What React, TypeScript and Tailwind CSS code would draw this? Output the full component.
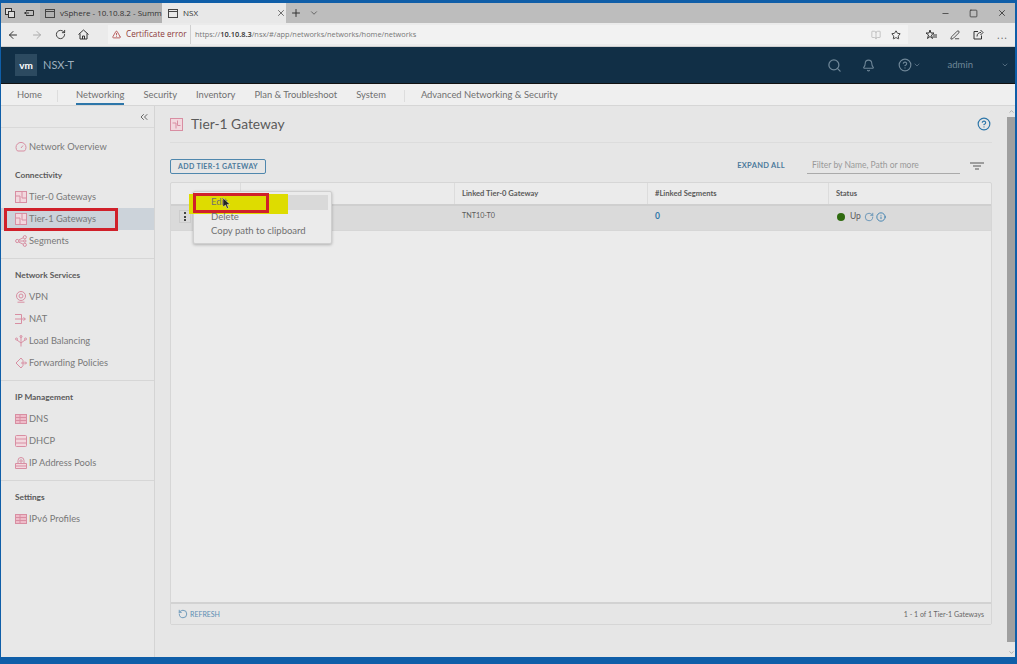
import { ArrowLeft, ArrowRight, RotateCw, TriangleAlert, BookOpen, Star, PenLine, X, Plus, ChevronDown, Minus, Square, Search, Bell, CircleHelp, ChevronsLeft, Info, ChevronUp } from "lucide-react";
import type { ReactNode } from "react";

const pink = "#d88ea2";

function GatewayIcon() {
  return (
    <svg width="12" height="12" viewBox="0 0 12 12" fill="#f2d8de" stroke={pink} strokeWidth="1" className="shrink-0">
      <rect x="0.500" y="0.500" width="11" height="11" />
      <path d="M0.500 5H5V11.500M7 0.500V7H11.500" fill="none" />
    </svg>
  );
}

function ServerIcon() {
  return (
    <svg width="12" height="12" viewBox="0 0 12 12" fill="#eebcc9" stroke={pink} strokeWidth="1" className="shrink-0">
      <rect x="0.500" y="1.500" width="11" height="9" />
      <path d="M0.500 4.500H11.500M0.500 7.500H11.500M5 1.500V10.500" />
    </svg>
  );
}

function GaugeIcon() {
  return (
    <svg width="12" height="12" viewBox="0 0 12 12" fill="none" stroke={pink} strokeWidth="1" className="shrink-0">
      <path d="M2.500 10a5 5 0 1 1 7 0z" />
      <path d="M6 7l2-2.500" />
    </svg>
  );
}

function SegmentsIcon() {
  return (
    <svg width="12" height="12" viewBox="0 0 12 12" fill="none" stroke={pink} strokeWidth="1" className="shrink-0">
      <circle cx="2.200" cy="6" r="1.600" />
      <circle cx="9.800" cy="2.200" r="1.600" />
      <circle cx="9.800" cy="9.800" r="1.600" />
      <circle cx="9.800" cy="6" r="1.200" />
      <path d="M3.800 6H8.500M3.600 5l4.800-2.300M3.600 7l4.800 2.300" />
    </svg>
  );
}

function VpnIcon() {
  return (
    <svg width="12" height="12" viewBox="0 0 12 12" fill="none" stroke={pink} strokeWidth="1" className="shrink-0">
      <circle cx="6" cy="5" r="4.500" />
      <circle cx="6" cy="5" r="2" />
      <path d="M2.500 11.200H9.500" />
    </svg>
  );
}

function NatIcon() {
  return (
    <svg width="12" height="12" viewBox="0 0 12 12" fill="none" stroke={pink} strokeWidth="1" className="shrink-0">
      <path d="M0 1.500H6.500V10.500H0M0 6H10M8.500 4.500L10.500 6L8.500 7.500" />
    </svg>
  );
}

function BalanceIcon() {
  return (
    <svg width="12" height="12" viewBox="0 0 12 12" fill="none" stroke={pink} strokeWidth="1" className="shrink-0">
      <path d="M6 1.500V11.500M6 8L2 5M6 8L10 5" />
      <circle cx="6" cy="1.500" r="1" />
      <circle cx="1.500" cy="4" r="1" />
      <circle cx="10.500" cy="4" r="1" />
    </svg>
  );
}

function ForwardIcon() {
  return (
    <svg width="12" height="12" viewBox="0 0 12 12" fill="none" stroke={pink} strokeWidth="1" className="shrink-0">
      <path d="M6 1L1 6L6 11L8 8.500V3.500Z" />
      <path d="M6 6H11.500M10 4.500L11.500 6L10 7.500" />
    </svg>
  );
}

function DhcpIcon() {
  return (
    <svg width="12" height="12" viewBox="0 0 12 12" fill="#f2d8de" stroke={pink} strokeWidth="1" className="shrink-0">
      <rect x="0.500" y="0.500" width="11" height="11" rx="1" />
      <path d="M0.500 4H11.500M0.500 8H11.500" />
    </svg>
  );
}

function PoolIcon() {
  return (
    <svg width="12" height="12" viewBox="0 0 12 12" fill="none" stroke={pink} strokeWidth="1" className="shrink-0">
      <path d="M3 6V3.500a3 3 0 0 1 6 0V6" />
      <circle cx="6" cy="4" r="1.200" />
      <path d="M0.500 6.500H11.500V11.500H0.500ZM0.500 9H11.500" fill="#f2d8de" />
    </svg>
  );
}

function Item({ icon, label, active }: { icon: ReactNode; label: string; active?: boolean }) {
  return (
    <div className={`flex h-[22px] items-center gap-[2px] pl-[14px] text-[9.300px] text-[#787878] ${active ? "bg-[#ccd3da]" : ""}`}>
      {icon}
      <span>{label}</span>
    </div>
  );
}

function Section({ title }: { title: string }) {
  return <div className="pl-[14px] text-[8.300px] font-bold leading-[10px] text-[#5a5a5a]">{title}</div>;
}

export default function App() {
  return (
    <div className="relative flex h-[664px] w-[1017px] flex-col overflow-hidden border-y-0 border-r-2 border-l border-t-[3px] border-b-[7px] border-[#0f5ea8] bg-[#e6e6e6] font-['Lato',sans-serif]">
      {/* browser tabs */}
      <div className="flex h-[20px] shrink-0 items-center bg-[#bdbdbd] font-['Open_Sans',sans-serif] text-[8px] text-[#333]">
        <div className="flex w-[39px] items-center gap-[9px] pl-[4px]">
          <svg width="10" height="10" viewBox="0 0 10 10" fill="#dcdcdc" stroke="#333"><rect x="0.500" y="0.500" width="6" height="6" /><rect x="3.500" y="3.500" width="6" height="6" /></svg>
          <svg width="10" height="10" viewBox="0 0 10 10" fill="none" stroke="#333"><path d="M2 2.500H9.500V7.500H2M0 5H5M2.500 3.500L1 5L2.500 6.500" /></svg>
        </div>
        <div className="flex h-full w-[122px] items-center gap-[5px] bg-[#b2b2b2] pl-[5px]">
          <svg width="10" height="9" viewBox="0 0 10 9" fill="none" stroke="#444" className="shrink-0"><rect x="0.500" y="0.500" width="9" height="8" /><path d="M0.500 2.500H9.500" /></svg>
          <span className="whitespace-nowrap">vSphere - 10.10.8.2 - Summ</span>
        </div>
        <div className="flex h-full w-[124px] items-center gap-[5px] bg-[#e8e8e8] pl-[6px]">
          <svg width="10" height="9" viewBox="0 0 10 9" fill="none" stroke="#444"><rect x="0.500" y="0.500" width="9" height="8" /><path d="M0.500 2.500H9.500" /></svg>
          <span>NSX</span>
          <X size={10} className="ml-[73px] text-[#555]" />
        </div>
        <Plus size={12} className="ml-[4px] text-[#333]" />
        <ChevronDown size={10} className="ml-[7px] text-[#555]" />
        <div className="ml-auto flex items-center gap-[19px] pr-[8px] text-[#333]">
          <Minus size={9} />
          <Square size={9} />
          <X size={10} />
        </div>
      </div>

      {/* address bar */}
      <div className="flex h-[24px] shrink-0 items-center border-b border-[#cfcfcf] bg-[#ebebeb] font-['Open_Sans',sans-serif] text-[#333]">
        <div className="flex w-[107px] items-center gap-[12px] pl-[6px]">
          <ArrowLeft size={12} />
          <ArrowRight size={12} className="text-[#aaa]" />
          <RotateCw size={11} />
          <svg width="11" height="11" viewBox="0 0 11 11" fill="none" stroke="#333" className="shrink-0"><path d="M0.500 5.500L5.500 1L10.500 5.500M2 4.500V10H9V4.500M4.500 10V7H6.500V10" /></svg>
        </div>
        <div className="flex h-[19px] w-[82px] items-center gap-[5px] bg-[#f2f2f2] pl-[4px] text-[8.200px] text-[#8c3a3a]">
          <TriangleAlert size={9} className="shrink-0 text-[#a33]" />
          <span className="whitespace-nowrap">Certificate error</span>
        </div>
        <div className="flex h-[19px] w-[718px] items-center justify-between border-l border-[#d0d0d0] bg-[#f2f2f2] pl-[4px] pr-[7px] text-[7.400px] text-[#777]">
          <span><span>https://</span><b className="font-semibold text-[#333]">10.10.8.3</b>/nsx/#/app/networks/networks/home/networks</span>
          <div className="flex items-center gap-[10px]">
            <BookOpen size={10} className="text-[#bbb]" />
            <Star size={10} className="text-[#222]" />
          </div>
        </div>
        <div className="ml-[18px] flex items-center gap-[13px]">
          <svg width="11" height="11" viewBox="0 0 11 11" fill="none" stroke="#333" className="shrink-0"><path d="M4 1L5 4H8L5.500 6L6.500 9.500L4 7.500L1.500 9.500L2.500 6L0 4H3ZM7 6H11M7 8H11" /></svg>
          <PenLine size={10} />
          <svg width="11" height="11" viewBox="0 0 11 11" fill="none" stroke="#333" className="shrink-0"><path d="M5 2.500H1V10H8.500V6.500M4 7.500C4 4.500 6 3.500 8 3.500M7.500 1L10 3.500L7.500 6" /></svg>
          <span className="text-[10px] leading-none tracking-[1px] text-[#666]">...</span>
        </div>
      </div>

      {/* NSX header */}
      <div className="flex h-[37px] shrink-0 items-center border-b border-[#111] bg-[#112f46] text-[#6f8798]">
        <div className="ml-[14px] flex h-[22px] w-[22px] items-center justify-center bg-[#2c4a60] text-[10px] font-bold text-white">vm</div>
        <span className="ml-[6px] text-[11px] text-[#9fb0bd]">NSX-T</span>
        <div className="ml-auto flex items-center">
          <Search size={15} />
          <Bell size={13} className="ml-[20px]" />
          <CircleHelp size={14} className="ml-[23px]" />
          <ChevronDown size={8} className="ml-[1px]" />
          <span className="ml-[27px] text-[9.500px]">admin</span>
          <ChevronDown size={8} className="ml-[28px] mr-[6px]" />
        </div>
      </div>

      {/* nav */}
      <div className="flex h-[22px] shrink-0 items-center border-b border-[#d6d6d6] bg-[#efefef] pt-[2px] text-[9.400px] text-[#707070]">
        <span className="ml-[16px]">Home</span>
        <span className="ml-[15px] h-[12px] w-px bg-[#ddd]" />
        <div className="relative ml-[18px] flex h-full items-center">
          Networking
          <span className="absolute inset-x-0 bottom-0 h-[2px] bg-[#2d76a9]" />
        </div>
        <span className="ml-[19px]">Security</span>
        <span className="ml-[19px]">Inventory</span>
        <span className="ml-[19px]">Plan &amp; Troubleshoot</span>
        <span className="ml-[19px]">System</span>
        <span className="ml-[18px] h-[12px] w-px bg-[#ddd]" />
        <span className="ml-[16px]">Advanced Networking &amp; Security</span>
      </div>

      <div className="flex min-h-0 flex-1">
        {/* sidebar */}
        <div className="flex w-[154px] shrink-0 flex-col border-r border-[#d4d4d4] bg-[#e8e8e8]">
          <div className="flex h-[22px] shrink-0 items-center justify-end border-b border-[#d9d9d9] pr-[4px]">
            <ChevronsLeft size={12} className="text-[#666]" />
          </div>
          <div className="pt-[8px]">
            <Item icon={<GaugeIcon />} label="Network Overview" />
          </div>
          <div className="pt-[12px]"><Section title="Connectivity" /></div>
          <div className="flex flex-col pt-[6px]">
            <Item icon={<GatewayIcon />} label="Tier-0 Gateways" />
            <Item icon={<GatewayIcon />} label="Tier-1 Gateways" active />
            <Item icon={<SegmentsIcon />} label="Segments" />
          </div>
          <div className="mt-[6px] border-t border-[#d6d6d6] pt-[11px]"><Section title="Network Services" /></div>
          <div className="flex flex-col pt-[6px]">
            <Item icon={<VpnIcon />} label="VPN" />
            <Item icon={<NatIcon />} label="NAT" />
            <Item icon={<BalanceIcon />} label="Load Balancing" />
            <Item icon={<ForwardIcon />} label="Forwarding Policies" />
          </div>
          <div className="mt-[6px] border-t border-[#d6d6d6] pt-[11px]"><Section title="IP Management" /></div>
          <div className="flex flex-col pt-[6px]">
            <Item icon={<ServerIcon />} label="DNS" />
            <Item icon={<DhcpIcon />} label="DHCP" />
            <Item icon={<PoolIcon />} label="IP Address Pools" />
          </div>
          <div className="mt-[6px] border-t border-[#d6d6d6] pt-[11px]"><Section title="Settings" /></div>
          <div className="flex flex-col pt-[6px]">
            <Item icon={<ServerIcon />} label="IPv6 Profiles" />
          </div>
        </div>

        {/* content */}
        <div className="flex min-w-0 flex-1 flex-col px-[15px]">
          <div className="flex h-[37px] shrink-0 items-center justify-between border-b border-[#dcdcdc] pr-[1px]">
            <div className="flex items-center gap-[8px]">
              <svg width="13" height="13" viewBox="0 0 13 13" fill="#f2d8de" stroke={pink} strokeWidth="1" className="shrink-0">
                <rect x="0.500" y="0.500" width="12" height="12" />
                <path d="M2.500 5H6V10.500M7.500 2.500V7.500H10.500" fill="none" />
              </svg>
              <span className="text-[13.800px] text-[#5a5a5a]">Tier-1 Gateway</span>
            </div>
            <CircleHelp size={14} className="text-[#2d76a9]" />
          </div>

          <div className="flex h-[39px] shrink-0 items-center pt-[7px]">
            <div className="flex h-[15px] w-[96px] items-center justify-center rounded-[2px] border border-[#4f87ad] text-[7px] font-bold tracking-[0.35px] text-[#4c7a9c]">ADD TIER-1 GATEWAY</div>
            <span className="ml-auto text-[7.500px] font-bold tracking-[0.3px] text-[#4c7a9c]">EXPAND ALL</span>
            <div className="ml-[22px] flex h-[15px] w-[153px] items-center border-b border-[#aaa] pl-[5px] text-[8.500px] text-[#999]">Filter by Name, Path or more</div>
            <svg width="14" height="8" viewBox="0 0 14 8" fill="none" stroke="#555" className="ml-[10px] mr-[8px]"><path d="M0 1H14M3 4H11M5 7H9" /></svg>
          </div>

          {/* table */}
          <div className="flex min-h-0 flex-1 flex-col rounded-[2px] border border-[#d6d6d6] bg-[#ebebeb]">
            <div className="flex h-[23px] shrink-0 items-center border-b-2 border-[#cfcfcf] text-[7.600px] font-bold text-[#5a5a5a]">
              <div className="h-full w-[70px] shrink-0 border-r border-[#dcdcdc]" />
              <div className="h-full w-[214px] shrink-0 border-r border-[#dcdcdc]" />
              <div className="flex h-full w-[193px] shrink-0 items-center border-r border-[#dcdcdc] pl-[7px]">Linked Tier-0 Gateway</div>
              <div className="flex h-full w-[181px] shrink-0 items-center border-r border-[#dcdcdc] pl-[7px]">#Linked Segments</div>
              <div className="pl-[7px]">Status</div>
            </div>
            <div className="flex h-[25px] shrink-0 items-center border-b border-[#d6d6d6] bg-[#dadada] pb-[3px] text-[8.500px] text-[#5a5a5a]">
              <div className="flex w-[70px] shrink-0 pl-[8px]">
                <div className="flex h-[13px] w-[12px] flex-col items-center justify-center gap-[1.500px] border border-[#ccc]">
                  <span className="h-[2px] w-[2px] bg-[#444]" />
                  <span className="h-[2px] w-[2px] bg-[#444]" />
                  <span className="h-[2px] w-[2px] bg-[#444]" />
                </div>
              </div>
              <div className="w-[214px] shrink-0" />
              <div className="w-[193px] shrink-0 pl-[7px] text-[7.200px]">TNT10-T0</div>
              <div className="w-[181px] shrink-0 pl-[7px] font-bold text-[#2d76a9]">0</div>
              <div className="flex items-center pl-[8px]">
                <span className="h-[8px] w-[8px] rounded-full bg-[#2f6b10]" />
                <span className="ml-[5px]">Up</span>
                <RotateCw size={10} className="ml-[3px] text-[#5a8db3]" />
                <Info size={10} className="ml-[2px] text-[#2d76a9]" />
              </div>
            </div>
            <div className="flex-1" />
            <div className="flex h-[22px] shrink-0 items-center justify-between border-t-2 border-[#d2d2d2] bg-[#e6e6e6] pl-[7px] pr-[7px] text-[7px]">
              <div className="flex items-center gap-[2px] text-[#5a8db3]">
                <RotateCw size={10} className="-scale-x-100" />
                <span>REFRESH</span>
              </div>
              <span className="text-[#666]">1 - 1 of 1 Tier-1 Gateways</span>
            </div>
          </div>
          <div className="h-[32px] shrink-0" />
        </div>

        {/* scrollbar */}
        <div className="flex w-[8px] shrink-0 flex-col items-center bg-[#e6e6e6]">
          <ChevronUp size={7} className="my-[2px] text-[#888]" />
          <div className="h-[525px] w-full bg-[#9f9f9f]" />
          <ChevronDown size={7} className="mt-auto mb-[1px] text-[#888]" />
        </div>
      </div>

      {/* row action menu */}
      <div className="absolute left-[192px] top-[188px] flex h-[53px] w-[139px] flex-col rounded-[2px] border border-[#cfcfcf] bg-[#ebebeb] px-[3px] pt-[3px] text-[9.500px] text-[#707070] shadow-[0_1px_3px_rgba(0,0,0,0.25)]">
        <div className="relative flex h-[15px] shrink-0 items-center bg-[#d9d9d9] pl-[14px]">
          {/* yellow marker painted on the screenshot */}
          <span className="absolute -left-[8px] -top-[1px] h-[20px] w-[99px] bg-[#dedc00]" />
          <span className="relative">Edit</span>
        </div>
        <div className="relative flex h-[15px] shrink-0 items-center pl-[14px]">Delete</div>
        <div className="flex h-[13px] shrink-0 items-center pl-[14px]">Copy path to clipboard</div>
      </div>

      {/* annotations drawn on the screenshot */}
      <div className="absolute left-[192px] top-[190px] h-[20px] w-[76px] border-[3px] border-[#d0202a]" />
      <div className="absolute left-[3px] top-[205px] h-[23px] w-[114px] border-[3px] border-[#d0202a]" />
      <svg width="8" height="11" viewBox="0 0 8 11" className="absolute left-[222px] top-[195px]"><path d="M0 0V9L2.500 7L4 10.500L5.500 10L4 6.500H7Z" fill="#222" stroke="#fff" strokeWidth="0.400" /></svg>
    </div>
  );
}
